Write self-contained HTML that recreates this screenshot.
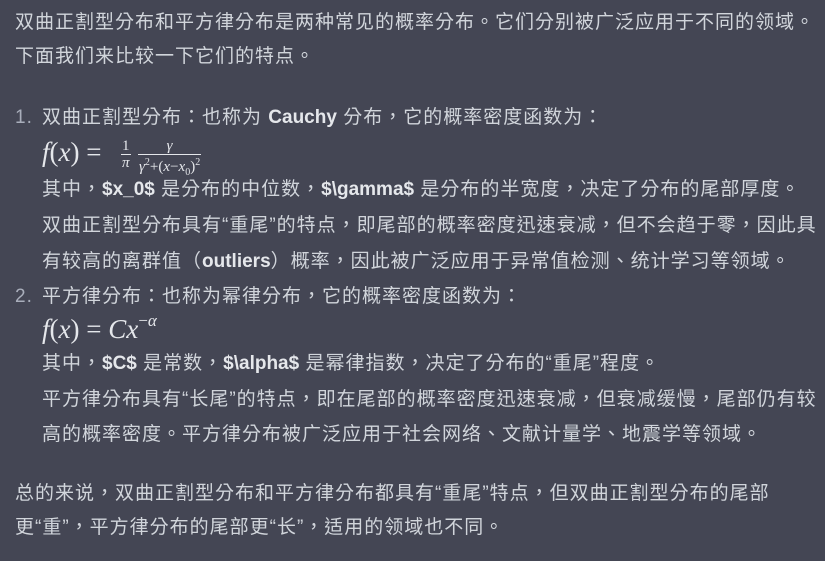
<!DOCTYPE html>
<html><head><meta charset="utf-8"><style>
body{margin:0;width:825px;height:561px;background:#444654;overflow:hidden;position:relative;font-family:"Liberation Sans","Noto Sans CJK TC",sans-serif;color:#d1d5db;}
.l{position:absolute;white-space:nowrap;font-size:19px;letter-spacing:1px;line-height:24px;}
.b{font-weight:bold;color:#e5e7eb;letter-spacing:0;}
.m{position:absolute;white-space:nowrap;font-family:"Liberation Serif","DejaVu Serif",serif;color:#e5e7eb;}
.i{font-style:italic;}
</style></head><body>
<div class="l" style="left:15px;top:11px">双曲正割型分布和平方律分布是两种常见的概率分布。它们分别被广泛应用于不同的领域。</div>
<div class="l" style="left:15px;top:45px">下面我们来比较一下它们的特点。</div>
<div class="l" style="left:15px;top:106px;color:#a9aebb">1.</div>
<div class="l" style="left:42px;top:106px">双曲正割型分布：也称为 <span class="b">Cauchy</span> 分布，它的概率密度函数为：</div>
<div class="m" style="left:42px;top:137px;font-size:27px"><span class="i">f</span>(<span class="i">x</span>) =</div>
<div class="m" style="left:121px;top:138px;font-size:15px;text-align:center;line-height:16px"><div>1</div><div style="border-top:1px solid #e5e7eb;padding:0 1px" class="i">π</div></div>
<div class="m" style="left:138px;top:138px;font-size:15px;text-align:center;line-height:16px"><div class="i">γ</div><div style="border-top:1px solid #e5e7eb;padding:0 1px"><span class="i">γ</span><sup style="font-size:10px">2</sup>+(<span class="i">x</span>−<span class="i">x</span><sub style="font-size:10px">0</sub>)<sup style="font-size:10px">2</sup></div></div>
<div class="l" style="left:42px;top:178px">其中，<span class="b">$x_0$</span> 是分布的中位数，<span class="b">$\gamma$</span> 是分布的半宽度，决定了分布的尾部厚度。</div>
<div class="l" style="left:42px;top:214px">双曲正割型分布具有“重尾”的特点，即尾部的概率密度迅速衰减，但不会趋于零，因此具</div>
<div class="l" style="left:42px;top:250px">有较高的离群值（<span class="b">outliers</span>）概率，因此被广泛应用于异常值检测、统计学习等领域。</div>
<div class="l" style="left:15px;top:285px;color:#a9aebb">2.</div>
<div class="l" style="left:42px;top:285px">平方律分布：也称为幂律分布，它的概率密度函数为：</div>
<div class="m" style="left:42px;top:313px;font-size:27px"><span class="i">f</span>(<span class="i">x</span>) = <span class="i">Cx</span><sup style="font-size:17px;position:relative;top:-2px">−<span class="i">α</span></sup></div>
<div class="l" style="left:42px;top:352px">其中，<span class="b">$C$</span> 是常数，<span class="b">$\alpha$</span> 是幂律指数，决定了分布的“重尾”程度。</div>
<div class="l" style="left:42px;top:388px">平方律分布具有“长尾”的特点，即在尾部的概率密度迅速衰减，但衰减缓慢，尾部仍有较</div>
<div class="l" style="left:42px;top:423px">高的概率密度。平方律分布被广泛应用于社会网络、文献计量学、地震学等领域。</div>
<div class="l" style="left:15px;top:482px">总的来说，双曲正割型分布和平方律分布都具有“重尾”特点，但双曲正割型分布的尾部</div>
<div class="l" style="left:15px;top:516px">更“重”，平方律分布的尾部更“长”，适用的领域也不同。</div>
</body></html>
